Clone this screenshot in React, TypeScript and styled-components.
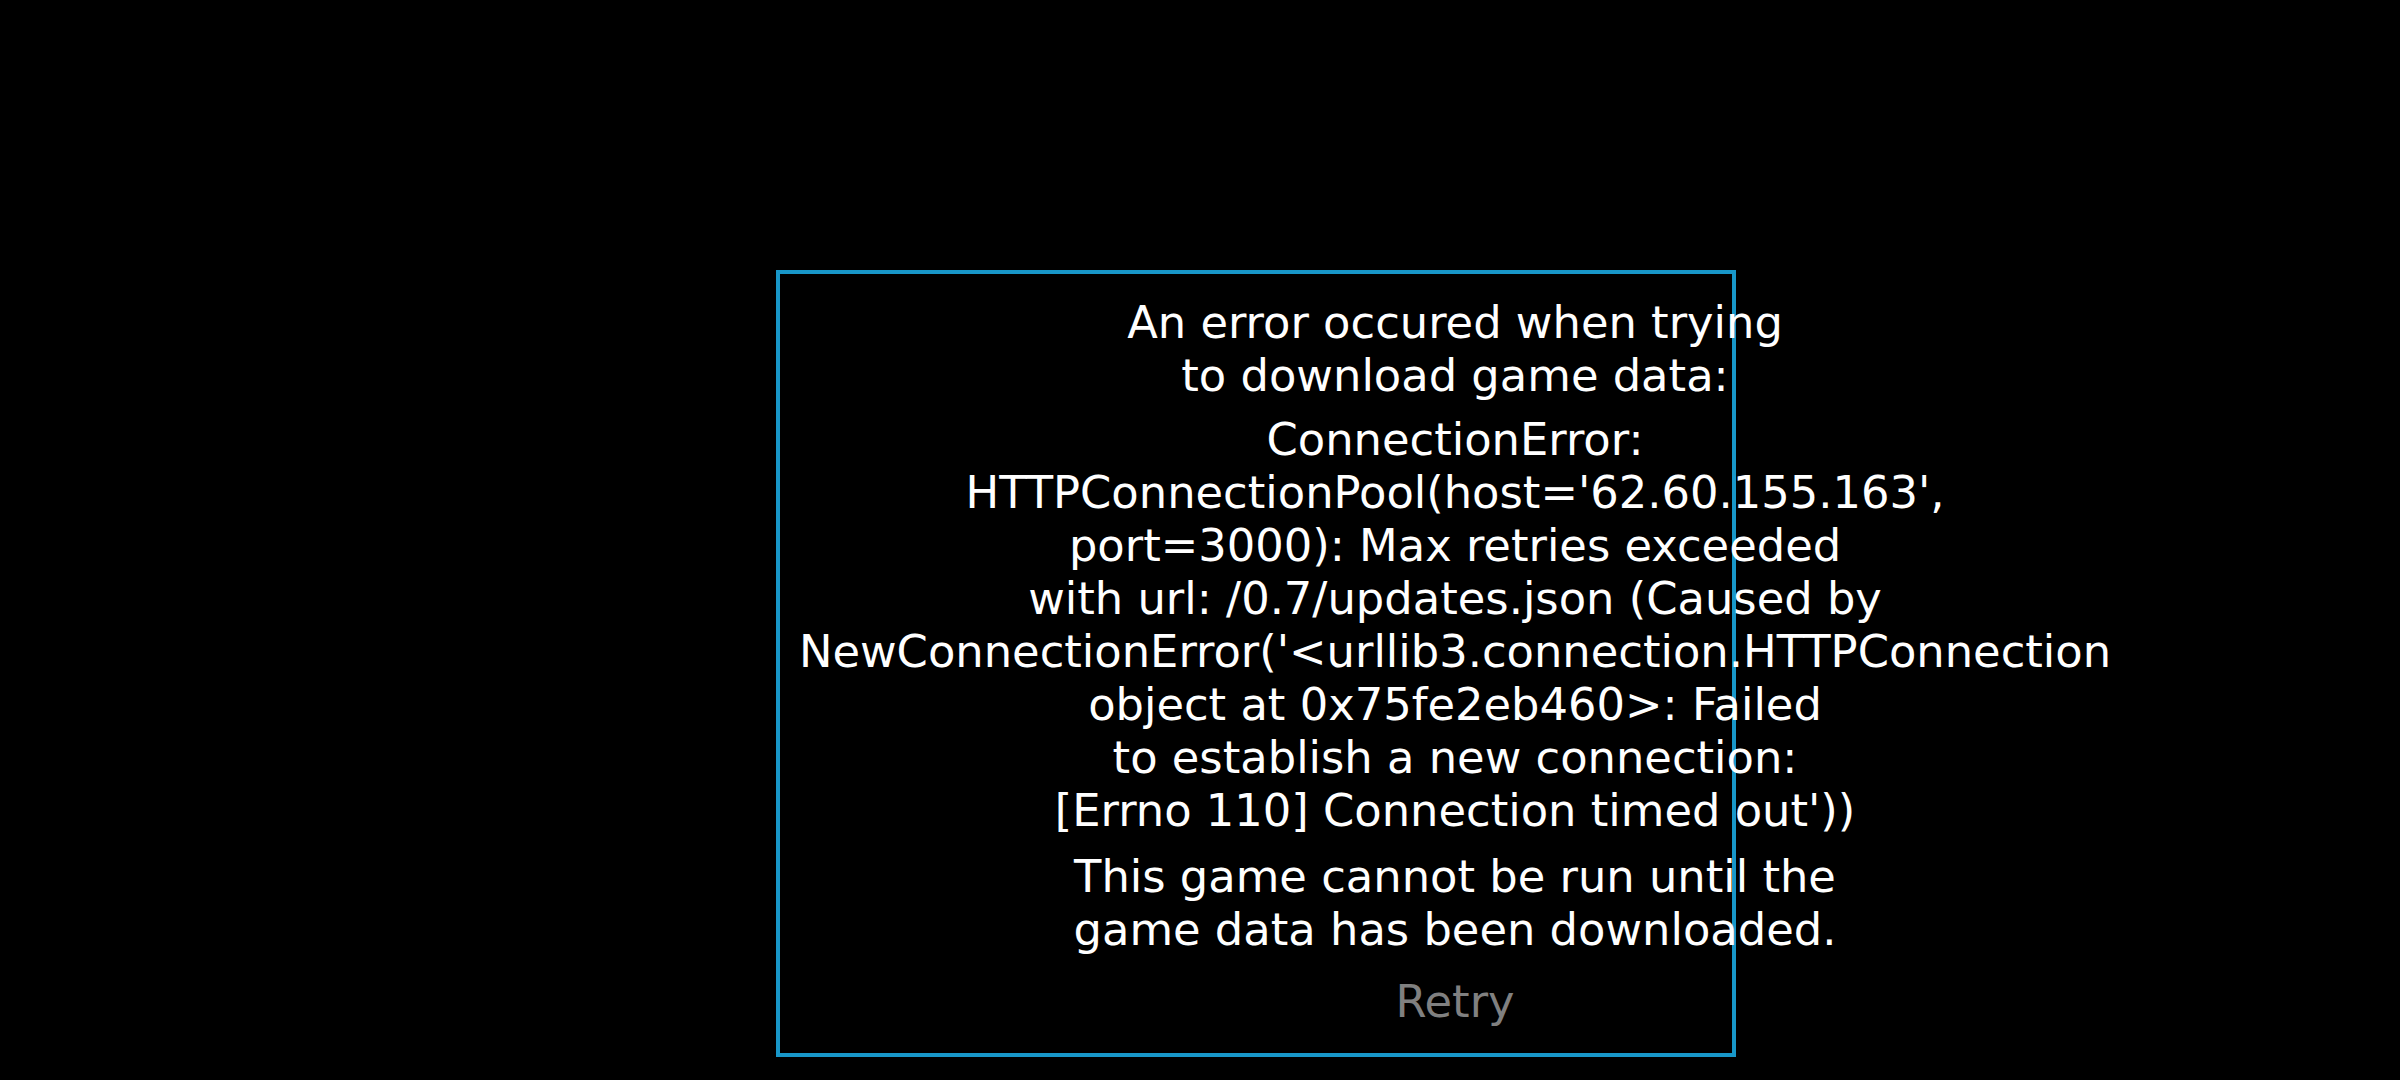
import React from "react";
import styled, { createGlobalStyle } from "styled-components";

const GlobalStyle = createGlobalStyle`
  html, body {
    margin: 0;
    padding: 0;
    background: #000000;
  }
  body {
    font-family: "DejaVu Sans", "Liberation Sans", sans-serif;
    color: #ffffff;
  }
`;

const Screen = styled.div`
  width: 2400px;
  height: 1080px;
  background: #000000;
  box-sizing: border-box;
  padding: 270px 0 0 776px;
  overflow: hidden;
`;

const Panel = styled.div`
  box-sizing: border-box;
  width: 960px;
  height: 787px;
  border: 4px solid #1897c9;
  display: flex;
  flex-direction: column;
  padding-top: 21.5px;
`;

const Content = styled.div`
  width: 952px;
  margin-left: 199px;
  display: flex;
  flex-direction: column;
  align-items: center;
`;

const Paragraph = styled.p<{ $gap: number }>`
  margin: ${(p) => p.$gap}px 0 0 0;
  font-family: "DejaVu Sans", "Liberation Sans", sans-serif;
  font-size: 44.8px;
  line-height: 53px;
  color: #ffffff;
  text-align: center;
  white-space: pre;
`;

const RetryButton = styled.button`
  margin-top: 19px;
  padding: 0;
  border: none;
  background: transparent;
  font-family: "DejaVu Sans", "Liberation Sans", sans-serif;
  font-size: 44.8px;
  line-height: 53px;
  color: #808080;
  cursor: pointer;
`;

export default function App() {
  return (
    <>
      <GlobalStyle />
      <Screen>
        <Panel>
          <Content>
            <Paragraph $gap={0}>
              {"An error occured when trying\nto download game data:"}
            </Paragraph>
            <Paragraph $gap={11.8}>
              {
                "ConnectionError:\nHTTPConnectionPool(host='62.60.155.163',\nport=3000): Max retries exceeded\nwith url: /0.7/updates.json (Caused by\nNewConnectionError('<urllib3.connection.HTTPConnection\nobject at 0x75fe2eb460>: Failed\nto establish a new connection:\n[Errno 110] Connection timed out'))"
              }
            </Paragraph>
            <Paragraph $gap={12.5}>
              {"This game cannot be run until the\ngame data has been downloaded."}
            </Paragraph>
            <RetryButton>Retry</RetryButton>
          </Content>
        </Panel>
      </Screen>
    </>
  );
}
